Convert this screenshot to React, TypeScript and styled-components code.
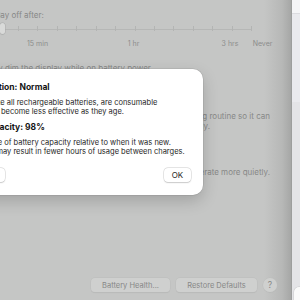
import React from "react";
import styled, { createGlobalStyle } from "styled-components";

const Global = createGlobalStyle`
  html, body { margin: 0; padding: 0; }
  body {
    width: 300px; height: 300px; overflow: hidden;
    font-family: Inter, "Noto Sans", "Liberation Sans", sans-serif;
    -webkit-font-smoothing: antialiased;
  }
`;

const Screen = styled.div`
  display: flex;
  width: 300px;
  height: 300px;
  overflow: hidden;
`;

const Window = styled.div`
  position: relative;
  width: 291px;
  height: 300px;
  flex: none;
  background: linear-gradient(to right, #c5c6c5 0, #c5c6c5 264px, #b7b8b7 282px, #a6a7a6 291px);
  overflow: hidden;
`;

const Content = styled.div`
  display: flex;
  flex-direction: column;
  margin-left: -37px;
  width: 328px;
  height: 300px;
  color: #878887;
  font-size: 8px;
`;

const Label = styled.div<{ $top: number }>`
  margin-top: ${(p) => p.$top}px;
  line-height: 10px;
  height: 10px;
  white-space: nowrap;
`;

const CheckRow = styled.div`
  margin-top: 14px;
  display: flex;
  align-items: center;
  gap: 3px;
  height: 10px;
  line-height: 10px;
  white-space: nowrap;
`;

const CheckBox = styled.div`
  width: 9px;
  height: 9px;
  border-radius: 2px;
  background: #d0d1d0;
  box-shadow: 0 0 0 0.5px #b3b4b3;
`;

const Slider = styled.div`
  position: relative;
  margin-top: 3px;
  width: 289px;
  height: 26px;
`;

const Track = styled.div`
  position: absolute;
  left: 0;
  right: 0;
  top: 6px;
  height: 1px;
  background: #b6b7b6;
`;

const Tick = styled.div`
  position: absolute;
  top: 3px;
  width: 1px;
  height: 5px;
  background: #b3b4b3;
`;

const Thumb = styled.div`
  position: absolute;
  top: 0;
  left: 37px;
  width: 5px;
  height: 11px;
  border-radius: 3px;
  background: #d9dad9;
  box-shadow: 0 0 0 0.5px #adaeae, 0 0.5px 1px rgba(0, 0, 0, 0.15);
`;

const TickLabel = styled.div`
  position: absolute;
  top: 16px;
  transform: translateX(-50%);
  font-size: 7px;
  line-height: 9px;
  color: #8c8d8c;
  white-space: nowrap;
`;

const DescLine = styled.div<{ $end: number; $top?: number }>`
  margin-top: ${(p) => p.$top ?? 0}px;
  width: ${(p) => p.$end + 37}px;
  text-align: right;
  line-height: 10px;
  height: 10px;
  white-space: nowrap;
  overflow: hidden;
`;

const Footer = styled.div`
  margin-top: auto;
  margin-bottom: 8px;
  display: flex;
  justify-content: flex-end;
  align-items: center;
  gap: 6px;
  padding-right: 14px;
`;

const GhostButton = styled.div<{ $w: number }>`
  width: ${(p) => p.$w}px;
  height: 14px;
  border-radius: 4px;
  background: #cfd0cf;
  box-shadow: 0 0 0 0.5px #bdbebd, 0 0.5px 1px rgba(0, 0, 0, 0.08);
  display: flex;
  align-items: center;
  justify-content: center;
  font-size: 7.5px;
  color: #878887;
`;

const HelpButton = styled.div`
  width: 14px;
  height: 14px;
  border-radius: 50%;
  background: #cfd0cf;
  box-shadow: 0 0 0 0.5px #bdbebd, 0 0.5px 1px rgba(0, 0, 0, 0.08);
  display: flex;
  align-items: center;
  justify-content: center;
  font-size: 8.5px;
  color: #878887;
`;

const Dialog = styled.div`
  position: absolute;
  left: -72px;
  top: 69px;
  width: 275px;
  height: 126px;
  box-sizing: border-box;
  padding: 13px 12px 12px 12px;
  background: #ffffff;
  border-radius: 10px;
  box-shadow: 0 0 0 0.5px rgba(0, 0, 0, 0.12), 0 6px 16px rgba(0, 0, 0, 0.18);
  display: flex;
  flex-direction: column;
  color: #1e1e1e;
`;

const Heading = styled.div<{ $top: number; $indent?: number }>`
  margin-top: ${(p) => p.$top}px;
  padding-left: ${(p) => p.$indent ?? 0}px;
  font-weight: 700;
  font-size: 8.5px;
  line-height: 11px;
  color: #141414;
  white-space: nowrap;
`;

const Body = styled.div<{ $top?: number; $indent?: number }>`
  margin-top: ${(p) => p.$top ?? 0}px;
  padding-left: ${(p) => p.$indent ?? 0}px;
  font-size: 7.5px;
  line-height: 9px;
  white-space: nowrap;
`;

const DialogButtons = styled.div`
  margin-top: 12px;
  display: flex;
  justify-content: space-between;
  align-items: center;
`;

const SheetButton = styled.div<{ $w: number }>`
  width: ${(p) => p.$w}px;
  height: 14px;
  border-radius: 4px;
  background: #ffffff;
  box-shadow: 0 0 0 0.5px rgba(0, 0, 0, 0.16), 0 0.5px 1.5px rgba(0, 0, 0, 0.14);
  display: flex;
  align-items: center;
  justify-content: center;
  font-size: 8px;
  color: #1e1e1e;
`;

const Side = styled.div`
  flex: 1;
  display: flex;
  flex-direction: column;
  border-left: 1px solid #9d9e9d;
  background: #e4e4e7;
`;

const SideTop = styled.div`
  height: 13px;
  background: #f5f5f7;
  border-bottom: 1px solid #dcdce0;
`;

const SideMid = styled.div`
  height: 88px;
  background: #eaeaee;
`;

const SideFill = styled.div`
  flex: 1;
  display: flex;
  align-items: flex-end;
`;

const SideCard = styled.div`
  margin-left: 2px;
  width: 12px;
  height: 13px;
  border-radius: 5px 0 0 0;
  background: #fafafa;
  box-shadow: 0 0 0 0.5px #c9c9cc;
`;

const ticks = Array.from({ length: 13 }, (_, i) => 18 + i * 19.42);
const labels = [
  { text: "15 min", at: 37.5 },
  { text: "1 hr", at: 133.5 },
  { text: "3 hrs", at: 230 },
  { text: "Never", at: 262.5 },
];

export default function App() {
  return (
    <>
      <Global />
      <Screen>
        <Window>
          <Content>
            <Label $top={10}>Turn display off after:</Label>
            <Slider>
              <Track />
              {ticks.map((x, i) => (
                <Tick key={i} style={{ left: x + 37 }} />
              ))}
              <Thumb />
              {labels.map((l) => (
                <TickLabel key={l.text} style={{ left: l.at + 37 }}>
                  {l.text}
                </TickLabel>
              ))}
            </Slider>
            <CheckRow>
              <CheckBox />
              Slightly dim the display while on battery power
            </CheckRow>
            <DescLine $end={270} $top={38}>
              Your Mac learns from your daily charging routine so it can
            </DescLine>
            <DescLine $end={210}>wait to finish charging when your Mac is ready.</DescLine>
            <DescLine $end={270} $top={36}>
              Your Mac will reduce energy usage and operate more quietly.
            </DescLine>
            <Footer>
              <GhostButton $w={79}>Battery Health...</GhostButton>
              <GhostButton $w={81}>Restore Defaults</GhostButton>
              <HelpButton>?</HelpButton>
            </Footer>
          </Content>
          <Dialog>
            <Heading $top={0} $indent={2}>Battery Condition: Normal</Heading>
            <Body $top={5}>Mac batteries, like all rechargeable batteries, are consumable</Body>
            <Body $indent={61}>become less effective as they age.</Body>
            <Heading $top={6}>Maximum Capacity: 98%</Heading>
            <Body $top={5}>This is a measure of battery capacity relative to when it was new.</Body>
            <Body>Lower capacity may result in fewer hours of usage between charges.</Body>
            <DialogButtons>
              <SheetButton $w={65}>Learn More...</SheetButton>
              <SheetButton $w={27}>OK</SheetButton>
            </DialogButtons>
          </Dialog>
        </Window>
        <Side>
          <SideTop />
          <SideMid />
          <SideFill>
            <SideCard />
          </SideFill>
        </Side>
      </Screen>
    </>
  );
}
